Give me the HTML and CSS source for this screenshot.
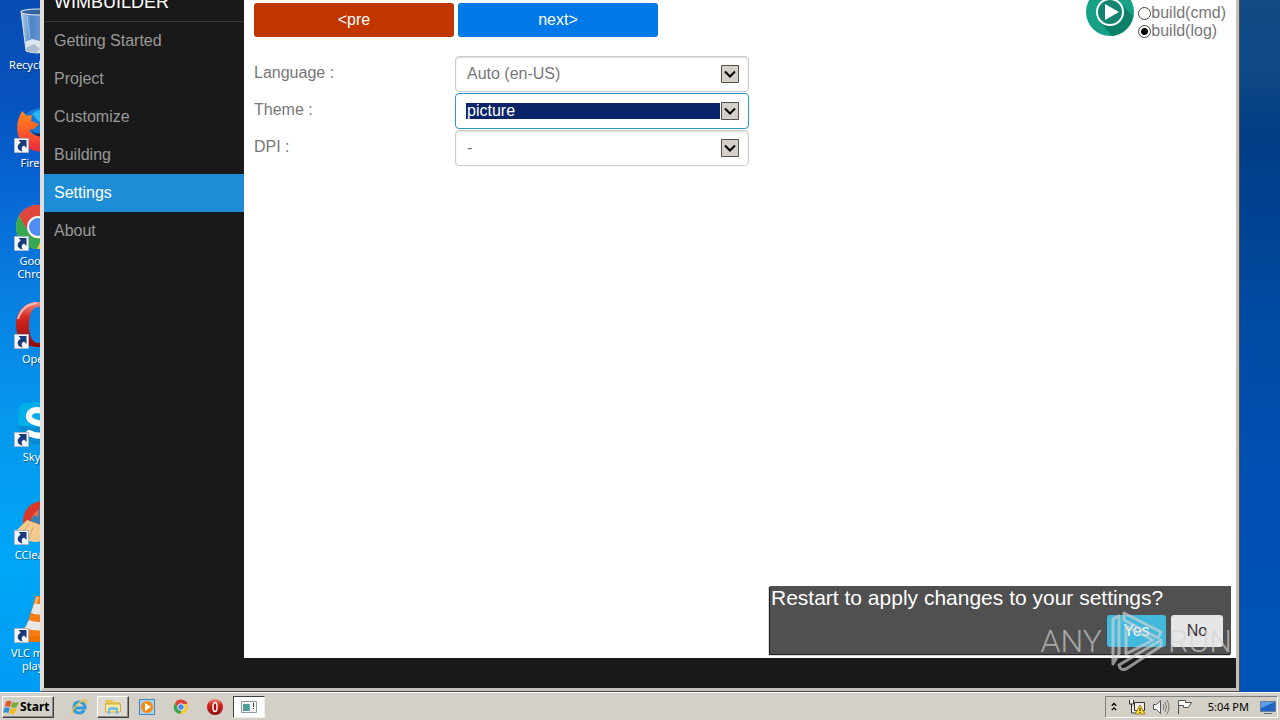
FILE: index.html
```html
<!DOCTYPE html>
<html lang="en">
<head>
<meta charset="utf-8">
<title>WimBuilder</title>
<link rel="stylesheet" href="styles.css">
</head>
<body>
<svg class="defs" aria-hidden="true">
  <defs>
    <linearGradient id="red" x1="0" y1="0" x2="0" y2="1"><stop offset="0" stop-color="#f08a80"/><stop offset=".35" stop-color="#d5271f"/><stop offset="1" stop-color="#8c0a08"/></linearGradient>
    <linearGradient id="fox" x1="0" y1="0" x2="0" y2="1"><stop offset="0" stop-color="#ff8a1e"/><stop offset=".5" stop-color="#fb5a28"/><stop offset="1" stop-color="#e9263f"/></linearGradient>
    <linearGradient id="bin" x1="0" y1="0" x2="1" y2="0"><stop offset="0" stop-color="#b9cfe6"/><stop offset=".3" stop-color="#4f86c8"/><stop offset="1" stop-color="#7fa9da"/></linearGradient>
    <symbol id="shortcut" viewBox="0 0 15 15"><path fill="#f4f6fa" stroke="#a9b8cc" d="M.5.5h14v14H.5z"/><path fill="#173a7c" d="M4.500 2H12.500v8L10 7.500C7.500 8.500 7 10.500 8.500 13.500 3.500 12.500 1.500 8 6.800 4.500z"/></symbol>
  </defs>
</svg>
<main class="desktop">
  <ul class="shortcuts">
    <li class="shortcut">
      <svg class="shortcut-icon" viewBox="0 0 48 48"><path fill="url(#bin)" stroke="#d3e0ee" d="M7 3l5 40q10 4 22 0l6-40z"/><path fill="#dde5ec" d="M11 34l7-3 8 2 11-2-3 12q-10 4-21 0z"/><path fill="#aebdcc" d="M12 40l8-4 6 5-4 4-9-2z"/><ellipse cx="24" cy="4" rx="17" ry="3" fill="#34649f" stroke="#e4edf5"/><path stroke="#e0ecf8" opacity=".5" d="M13 8l3 23"/></svg>
      <span>Recycle Bin</span>
    </li>
    <li class="shortcut">
      <svg class="shortcut-icon" viewBox="0 0 48 48"><circle cx="27" cy="22" r="20" fill="#117bd9"/><path fill="#29b4f2" d="M18 8q10-9 20 3l-9 9z"/><path fill="url(#fox)" d="M8 5l5 5 5-1-1 6 8 3-5 5-5 1q3 6 9 5l10-6-2 23Q8 46 4 29 1 17 8 5z"/><path fill="#203067" d="M17 24q6 6 12 2v4q-8 2-12-6z"/></svg>
      <svg class="shortcut-arrow"><use href="#shortcut"/></svg>
      <span>Firefox</span>
    </li>
    <li class="shortcut">
      <svg class="shortcut-icon" viewBox="0 0 48 48"><circle cx="24" cy="23" r="22" fill="#ffca28"/><path fill="#e0453b" d="M5 12A22 22 0 0 1 44 13H24L14 28z"/><path fill="#36a852" d="M5 12l10 17q4 7 13 5l-5 11A22 22 0 0 1 5 12z"/><circle cx="24" cy="23" r="11" fill="#f2f5fa"/><circle cx="24" cy="23" r="9" fill="#4f8df5"/></svg>
      <svg class="shortcut-arrow"><use href="#shortcut"/></svg>
      <span>Google Chrome</span>
    </li>
    <li class="shortcut">
      <svg class="shortcut-icon" viewBox="0 0 48 48"><path fill="url(#red)" fill-rule="evenodd" d="M24 0C10 0 2 10 2 23s8 22 22 22 22-9 22-22S38 0 24 0zm0 5c6 0 9 8 9 18s-3 18-9 18-9-8-9-18 3-18 9-18z"/><path fill="none" stroke="#f8bbb3" stroke-width="2" d="M4 17Q8 3 23 1"/></svg>
      <svg class="shortcut-arrow"><use href="#shortcut"/></svg>
      <span>Opera</span>
    </li>
    <li class="shortcut">
      <svg class="shortcut-icon" viewBox="0 0 48 48"><path fill="#00aeea" d="M5 14Q2 1 16 3q22-5 27 15 8 24-14 27Q5 45 5 23q-2-4 0-9z"/><path fill="#078dd4" d="M5 26q0 19 20 19h6V27z"/><path fill="none" stroke="#fff" stroke-width="6" stroke-linecap="round" d="M32 12q-14-5-17 3-1 6 9 8 10 2 8 8-4 8-17 2"/></svg>
      <svg class="shortcut-arrow"><use href="#shortcut"/></svg>
      <span>Skype</span>
    </li>
    <li class="shortcut">
      <svg class="shortcut-icon" viewBox="0 0 48 48"><circle cx="29" cy="23" r="20" fill="#d93826"/><circle cx="30" cy="24" r="13" fill="#f06b48"/><path fill="#397eb5" d="M25 10l12-4-6 22-15-5 4-6 4 2z"/><path fill="#f4c98d" d="M13 22l16 6-2 15q-14 4-25-10z"/><path stroke="#dba765" fill="none" d="M15 26L7 37m12-8l-4 12"/></svg>
      <svg class="shortcut-arrow"><use href="#shortcut"/></svg>
      <span>CCleaner</span>
    </li>
    <li class="shortcut">
      <svg class="shortcut-icon" viewBox="0 0 48 48"><path fill="#ec7300" d="M10 31h28l4 15H6z"/><path fill="#f57b12" d="M22 0h5l12 38q-15 6-29 0z"/><path fill="#e7e7e5" d="M20 8h10l3 9q-8 3-16 0zm-5 16q9 4 20 0l3 8q-13 5-27 0z"/><path fill="#ffaf58" d="M22 1l-2 7h3l2-7z"/></svg>
      <svg class="shortcut-arrow"><use href="#shortcut"/></svg>
      <span>VLC media player</span>
    </li>
  </ul>

  <section class="window" aria-label="WimBuilder">
    <nav class="sidebar">
      <h1 class="brand">WIMBUILDER</h1>
      <a class="nav-link" href="#start">Getting Started</a>
      <a class="nav-link" href="#project">Project</a>
      <a class="nav-link" href="#customize">Customize</a>
      <a class="nav-link" href="#building">Building</a>
      <a class="nav-link current" href="#settings" aria-current="page">Settings</a>
      <a class="nav-link" href="#about">About</a>
    </nav>
    <div class="content">
      <div class="toolbar">
        <div class="steps">
          <button class="step previous" type="button">&lt;pre</button>
          <button class="step next" type="button">next&gt;</button>
        </div>
        <div class="build">
          <button class="run" type="button" aria-label="Build">
            <svg viewBox="0 0 48 48"><circle cx="24" cy="24" r="24" fill="#16a085"/><path fill="#0e7f69" d="M34 15l13 13a24 24 0 0 1-21 20L14 34z"/><circle cx="24" cy="24" r="13" fill="#12846f" stroke="#fff" stroke-width="2"/><path fill="#fff" d="M19 16l14 8-14 8z"/></svg>
          </button>
          <div class="modes">
            <label class="mode"><input type="radio" name="build">build(cmd)</label>
            <label class="mode"><input type="radio" name="build" checked>build(log)</label>
          </div>
        </div>
      </div>
      <form class="settings">
        <label for="language">Language :</label>
        <div class="picker"><select id="language"><option>Auto (en-US)</option></select><svg class="arrow" viewBox="0 0 18 18"><path fill="#d4d0c8" stroke="#55504c" d="M.5.500h17v17H.500z"/><path fill="none" stroke="#000" stroke-width="2" d="M4 6.500l5 5 5-5"/></svg></div>
        <label for="theme">Theme :</label>
        <div class="picker"><select id="theme" class="active"><option>picture</option></select><svg class="arrow" viewBox="0 0 18 18"><path fill="#d4d0c8" stroke="#55504c" d="M.5.500h17v17H.500z"/><path fill="none" stroke="#000" stroke-width="2" d="M4 6.500l5 5 5-5"/></svg></div>
        <label for="dpi">DPI :</label>
        <div class="picker"><select id="dpi"><option>-</option></select><svg class="arrow" viewBox="0 0 18 18"><path fill="#d4d0c8" stroke="#55504c" d="M.5.500h17v17H.500z"/><path fill="none" stroke="#000" stroke-width="2" d="M4 6.500l5 5 5-5"/></svg></div>
      </form>
    </div>
    <div class="notice" role="dialog" aria-labelledby="notice-text">
      <p id="notice-text">Restart to apply changes to your settings?</p>
      <div class="notice-actions">
        <button class="yes" type="button">Yes</button>
        <button class="no" type="button">No</button>
      </div>
    </div>
  </section>
  <div class="watermark">
    <span>ANY</span>
    <svg viewBox="0 0 58 64"><g fill="none" stroke="currentColor" stroke-width="3" stroke-linejoin="round" stroke-linecap="round"><path d="M7 10l6-3v38l-6 10z"/><path d="M18 4l37 19-3 6-34-18z"/><path d="M20 17v28l27-14z"/><path d="M55 31v6L20 60q-6 2-7-4z"/></g></svg>
    <span>RUN</span>
  </div>
</main>

<footer class="taskbar">
  <button class="start" type="button"><svg viewBox="0 0 16 16"><path fill="#e65325" d="M3 3q3-2 5 0L6.500 8Q4 6.500 1.500 8z"/><path fill="#74ad35" d="M9 3q3 2 6 0l-2 5q-3 1.500-5.500 0z"/><path fill="#318fd4" d="M1.300 9q2.500-1.500 5 0L5 14q-2-2-5-.5z"/><path fill="#f3ba24" d="M7.300 9q2.500 1.500 5.500 0L11 14q-3 1.500-5 0z"/></svg>Start</button>
  <div class="tasks">
    <button class="task" type="button" aria-label="Internet Explorer"><svg viewBox="0 0 18 18"><path fill="none" stroke="#329bd8" stroke-width="3" d="M4 10h11q0-6-6-6-5 0-5 5.500T9 15q4 0 5-3"/><path fill="none" stroke="#ecc443" stroke-width="1.500" d="M3 16q-3-1 2-7Q12 1 16 2q2 1-1 4"/></svg></button>
    <button class="task raised" type="button" aria-label="Explorer"><svg viewBox="0 0 18 18"><path fill="#e7c655" d="M1 3l2-1h5l2 2h6v5H1z"/><path fill="#fbed9f" stroke="#c8aa47" d="M1.500 6h15v8h-15z"/><path fill="#71bce2" d="M4 16v-6q5-2 10 0v6h-2v-4H6v4z"/></svg></button>
    <button class="task" type="button" aria-label="Media Player"><svg viewBox="0 0 18 18"><path fill="#a9d0ed" stroke="#4185bc" d="M1.500 1.500h15v15h-15z"/><circle cx="9" cy="9" r="6" fill="#f68a11"/><path fill="#fff" d="M7 5l6 4-6 4z"/></svg></button>
    <button class="task" type="button" aria-label="Chrome"><svg viewBox="0 0 18 18"><circle cx="9" cy="9" r="7" fill="#f9cb31"/><path fill="#dc4437" d="M3 5a7 7 0 0 1 12.500 1H9l-3 5z"/><path fill="#35a653" d="M3 5l3 6 4 1-2 4A7 7 0 0 1 3 5z"/><circle cx="9" cy="9" r="3.300" fill="#4388ea" stroke="#eee"/></svg></button>
    <button class="task" type="button" aria-label="Opera"><svg viewBox="0 0 18 18"><circle cx="9" cy="9" r="8" fill="url(#red)"/><ellipse cx="9" cy="9" rx="2" ry="4.500" fill="#a50b0b" stroke="#fff" stroke-width="1.500"/></svg></button>
    <button class="task pressed" type="button" aria-label="WimBuilder"><svg viewBox="0 0 18 18"><path fill="#f5f5f2" stroke="#8a9ba8" d="M1.500 3.500h15v11h-15z"/><path fill="#4f9f92" d="M3 6h6v7H3z"/><path fill="#6fa8cd" d="M9 6h1v7H9z"/><path fill="#333" d="M13 5h1v4h-1zm0 5h1v1h-1z"/></svg></button>
  </div>
  <div class="tray">
    <svg viewBox="0 0 18 18"><path fill="none" stroke="#000" stroke-width="1.500" d="M6.500 7.500L9 5l2.500 2.500m-5 5L9 10l2.500 2.500"/></svg>
    <svg viewBox="0 0 18 18"><path fill="#eee" stroke="#333" d="M6.500 4.500h10v8h-10zM1.500 2v4h4V2M3.500 6v9h5"/><path fill="#ffdb24" stroke="#9b8420" d="M12 7l5 9H7z"/><path stroke="#000" d="M12 10v3m0 1v1"/></svg>
    <svg viewBox="0 0 18 18"><path fill="#fff" stroke="#555" d="M1.500 6.500h3l4-4v13l-4-4h-3z"/><path fill="none" stroke="#777" d="M11 6q2 3 0 6m2-8q3 5 0 10m2-12q4 7 0 14"/></svg>
    <svg viewBox="0 0 18 18"><path fill="#fff" stroke="#555" d="M2.500 16V2.500h7v2h6l-3 5h-5v-2h-5"/></svg>
    <time>5:04 PM</time>
    <svg viewBox="0 0 18 18"><path fill="#1f63c4" stroke="#66809d" d="M1.500 3.500h15v10h-15z"/><path fill="#5f9fe9" d="M2 4h14L2 10z"/><path stroke="#536c87" d="M5 15.500h8"/></svg>
  </div>
</footer>
</body>
</html>
```
FILE: styles.css
```css
* { box-sizing: border-box; }
body {
  margin: 0;
  height: 100vh;
  display: flex;
  flex-direction: column;
  overflow: hidden;
  font: 16px/18px "Liberation Sans", Arial, sans-serif;
  color: #777;
}
button, select, input { font: inherit; margin: 0; }
button { padding: 0; border: 0; }
.defs { position: absolute; width: 0; height: 0; }

.desktop {
  flex: 1;
  position: relative;
  overflow: hidden;
  background:
    linear-gradient(#124b86 0, #0e4885 70px, #003c84 140px, #00479b 270px, #0050b2 450px, #0052b5) right / 60px 100% no-repeat,
    linear-gradient(#084cb2 0, #0652bd 100px, #0764d3 180px, #087cdf 280px, #0598ed 420px, #00a6f6 560px, #009cf4);
}
.shortcuts {
  width: 76px;
  margin: 0;
  padding: 0;
  list-style: none;
  color: #fff;
  font: 11px/13px "Noto Sans", sans-serif;
  text-align: center;
}
.shortcut {
  position: relative;
  height: 98px;
  padding: 8px 8px 0;
}
.shortcut-icon { display: block; width: 48px; height: 48px; margin: 0 6px 2px; }
.shortcut span { display: block; margin: 0 -4px; text-shadow: 1px 1px 1px #0248; }
.shortcut-arrow { position: absolute; left: 14px; top: 40px; width: 15px; height: 15px; }

.window {
  position: absolute;
  inset: -32px 41px 1px 40px;
  display: flex;
  background: #191919;
  border: solid;
  border-width: 0 3px 3px 4px;
  border-color: #d4d0c8 #c4bfb8 #c4bfb8 #e2dfda;
  box-shadow: 1px 1px #514c49;
}
.sidebar { flex: 0 0 200px; background: #191919; }
.brand {
  margin: 0;
  padding: 24px 10px 9px;
  border-bottom: 1px solid #383838;
  color: #fff;
  font-size: 18px;
  font-weight: 400;
  line-height: 20px;
}
.nav-link {
  display: block;
  padding: 10px;
  color: #999;
  text-decoration: none;
}
.nav-link.current { background: #1f8dd6; color: #fff; }
.content {
  flex: 1;
  margin-bottom: 30px;
  padding: 20px 10px;
  background: #fff;
}
.toolbar { display: flex; justify-content: space-between; }
.steps { display: flex; gap: 4px; padding-top: 15px; }
.step { width: 200px; height: 34px; border-radius: 3px; color: #fff; }
.previous { background: #c03500; }
.next { background: #0078e7; }
.build { display: flex; gap: 4px; }
.run { width: 48px; height: 48px; border-radius: 50%; background: none; }
.run svg { display: block; }
.modes { padding-top: 16px; }
.mode { display: flex; align-items: center; }
.mode input {
  appearance: none;
  width: 13px;
  height: 13px;
  border: 1px solid #444;
  border-radius: 50%;
}
.mode input:checked { background: radial-gradient(#000 3px, #fff 4px); }
.settings {
  display: grid;
  grid-template-columns: 200px 294px;
  gap: 1px;
  margin-top: 16px;
}
.settings label { padding-top: 8px; }
.picker { position: relative; }
.picker select {
  appearance: none;
  display: block;
  width: 100%;
  height: 36px;
  padding: 9px 28px 9px 10px;
  border: 1px solid #ccc;
  border-radius: 4px;
  background: #fff;
  box-shadow: inset 0 1px 2px #ddd;
  color: #777;
  line-height: 16px;
  outline: 0;
  text-indent: 1px;
}
.picker select.active {
  border-color: #2c97ce;
  background: #0a246a content-box;
  color: #fff;
  box-shadow: none;
}
.arrow { position: absolute; right: 10px; top: 9px; width: 18px; height: 18px; pointer-events: none; }

.notice {
  position: absolute;
  right: 5px;
  bottom: 34px;
  width: 461px;
  background: #505050;
  box-shadow: -1px 1px 1px #222;
  color: #fff;
}
.notice p { margin: 0; padding: 0 1px; font-size: 21px; line-height: 23px; }
.notice-actions { display: flex; justify-content: flex-end; gap: 5px; padding: 6px 8px 7px; }
.notice-actions button { height: 32px; border-radius: 3px; }
.notice-actions .yes { width: 59px; background: #42b8dd; color: #fff; }
.notice-actions .no { width: 52px; background: #e6e6e6; color: #333; }
.watermark {
  position: absolute;
  right: 48px;
  bottom: 19px;
  display: flex;
  align-items: center;
  gap: 4px;
  color: #d4d4d4;
  opacity: .65;
  font: 300 32px/64px Roboto, sans-serif;
  pointer-events: none;
}
.watermark svg { width: 58px; height: 64px; }

.taskbar {
  display: flex;
  align-items: center;
  height: 28px;
  padding: 2px;
  border-top: 1px solid #fff;
  background: #d4d0c8;
}
.taskbar svg { width: 18px; height: 18px; }
.start, .raised { border: 1px solid; border-color: #fff #404040 #404040 #fff; box-shadow: inset -1px -1px #888; }
.start {
  display: flex;
  align-items: center;
  width: 52px;
  height: 22px;
  background: #d4d0c8;
  color: #000;
  font: bold 12px/18px "Noto Sans", sans-serif;
}
.start svg { width: 17px; }
.tasks { display: flex; gap: 2px; margin-left: 9px; }
.task { display: flex; align-items: center; justify-content: center; width: 32px; height: 22px; background: none; }
.raised { background: #dedbd5; }
.pressed { background: #fff; border: 1px solid; border-color: #404040 #eee #eee #404040; }
.tray {
  display: flex;
  align-items: center;
  gap: 6px;
  height: 22px;
  margin-left: auto;
  border: 1px solid;
  border-color: #808080 #fff #fff #808080;
  color: #000;
  font: 11px/18px "Noto Sans", sans-serif;
}
.tray svg:first-child { width: 16px; }
.tray time { margin: 0 4px 0 8px; }
```
